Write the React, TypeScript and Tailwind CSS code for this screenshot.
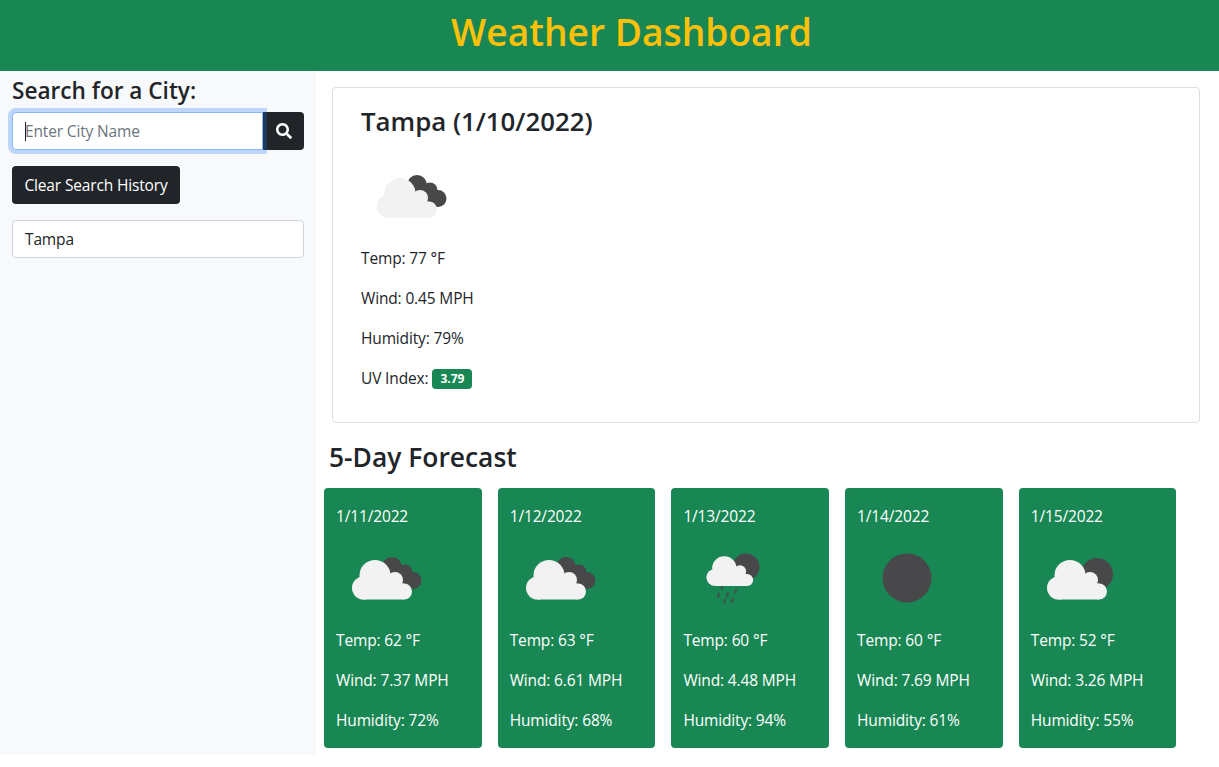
function Cloud() {
  return (
    <g fill="#f2f2f2">
      <circle cx="39" cy="45.500" r="15.500" />
      <circle cx="27.500" cy="58" r="11.500" />
      <circle cx="59" cy="50" r="8" />
      <circle cx="68" cy="61.500" r="8" />
      <path d="M27 69.500V46H59V53.500H68V69.500z" />
    </g>
  );
}

function Disc({ cx, cy, r }: { cx: number; cy: number; r: number }) {
  return <circle cx={cx} cy={cy} r={r} fill="#48484a" />;
}

function Icon({ kind }: { kind: string }) {
  return (
    <svg viewBox="0 0 100 100" className="w-[100px] h-[100px] block">
      {kind === "clouds" && (
        <>
          <Disc cx={56} cy={37} r={10} />
          <Disc cx={69} cy={42} r={7.500} />
          <Disc cx={77} cy={50.500} r={8.500} />
          <path d="M50 33L74 38L82 57L70 60L50 50z" fill="#48484a" />
          <Cloud />
        </>
      )}
      {kind === "partly" && (
        <>
          <Disc cx={66} cy={44} r={16} />
          <Cloud />
        </>
      )}
      {kind === "clear" && <Disc cx={50} cy={48} r={24.500} />}
      {kind === "rain" && (
        <>
          <Disc cx={63} cy={37} r={13.500} />
          <g transform="translate(10.900 3.800) scale(0.78 0.75)">
            <Cloud />
          </g>
          <g stroke="#48484a" strokeWidth="2.200" strokeLinecap="round" opacity="0.8">
            <path d="M39 57l-.4 1.500" />
            <path d="M36 64l-1 3" />
            <path d="M45 63l-1 3" />
            <path d="M53 60l-.8 2.500" />
            <path d="M42 70l-.8 2.500" />
            <path d="M50 69l-1 3" />
          </g>
        </>
      )}
    </svg>
  );
}

const days = [
  { d: "1/11/2022", k: "clouds", t: 62, w: "7.37", h: 72 },
  { d: "1/12/2022", k: "clouds", t: 63, w: "6.61", h: 68 },
  { d: "1/13/2022", k: "rain", t: 60, w: "4.48", h: 94 },
  { d: "1/14/2022", k: "clear", t: 60, w: "7.69", h: 61 },
  { d: "1/15/2022", k: "partly", t: 52, w: "3.26", h: 55 },
];

export default function App() {
  return (
    <div className="font-['Open_Sans','Noto_Sans',sans-serif] text-[15.500px] tracking-[-0.15px] leading-[24px] text-[#212529] bg-white min-h-[767px]">
      <header className="h-[71px] bg-[#198754] flex items-center justify-center pl-[44px] pb-[8px]">
        <h1 className="text-[37.200px] tracking-normal leading-[46px] font-semibold text-[#ffc107]">Weather Dashboard</h1>
      </header>
      <div className="flex">
        <aside className="w-[316px] h-[684px] bg-[#f8f9fa] px-3 shrink-0">
          <h2 className="text-[22.600px] tracking-normal leading-[28px] font-semibold pt-[6px]">Search for a City:</h2>
          <div className="flex mt-[7px] h-[38px]">
            <div className="relative z-10 w-[251px]">
              <input
                placeholder="Enter City Name"
                className="w-full h-[38px] bg-white border border-[#86b7fe] rounded-l-[4px] pl-[12px] pr-3 outline-none shadow-[0_0_0_4px_rgba(13,110,253,0.25)] placeholder:text-[#6c757d]"
              />
              <div className="absolute left-[13px] top-[10px] w-px h-[19px] bg-[#212529]" />
            </div>
            <button className="w-[41px] h-[38px] bg-[#212529] rounded-r-[4px] flex items-center justify-center">
              <svg viewBox="0 0 512 512" className="w-4 h-4" fill="#fff">
                <path d="M505 442.700L405.300 343c-4.500-4.500-10.600-7-17-7H372c27.600-35.300 44-79.700 44-128C416 93.100 322.900 0 208 0S0 93.100 0 208s93.100 208 208 208c48.300 0 92.700-16.400 128-44v16.300c0 6.400 2.500 12.500 7 17l99.700 99.700c9.400 9.400 24.600 9.400 33.900 0l28.300-28.300c9.400-9.400 9.400-24.600.1-34zM208 336c-70.700 0-128-57.200-128-128 0-70.700 57.200-128 128-128 70.700 0 128 57.200 128 128 0 70.700-57.200 128-128 128z" />
              </svg>
            </button>
          </div>
          <button className="block mt-4 h-[38px] w-[168px] bg-[#212529] text-white rounded-[4px]">Clear Search History</button>
          <div className="mt-4 h-[38px] bg-white border border-[#ced4da] rounded-[4px] pl-3 flex items-center">Tampa</div>
        </aside>
        <main className="flex-1 min-w-0">
          <section className="mt-4 ml-4 w-[868px] h-[336px] border border-[#dfdfdf] rounded-[4px] pl-7">
            <h2 className="text-[25.800px] tracking-normal leading-[32px] font-semibold pt-[17px]">Tampa (1/10/2022)</h2>
            <div className="mt-[11px] -mb-[2px]"><Icon kind="clouds" /></div>
            <p className="mb-4">Temp: 77 °F</p>
            <p className="mb-4">Wind: 0.45 MPH</p>
            <p className="mb-4">Humidity: 79%</p>
            <p className="flex items-center gap-1">
              UV Index:
              <span className="inline-flex items-center justify-center w-[40px] h-[20px] mt-[2px] rounded-[4px] bg-[#198754] text-white text-[12px] tracking-normal font-bold">3.79</span>
            </p>
          </section>
          <h2 className="text-[26.400px] tracking-normal leading-[34px] font-semibold ml-[13px] mt-[17px]">5-Day Forecast</h2>
          <div className="flex gap-[16.100px] ml-2 mt-[14px]">
            {days.map((x) => (
              <div key={x.d} className="w-[157.600px] h-[260px] rounded-[4px] bg-[#198754] text-white px-3 pt-4">
                <div>{x.d}</div>
                <div className="mt-[2px] -mb-[2px]"><Icon kind={x.k} /></div>
                <p className="mb-4">Temp: {x.t} °F</p>
                <p className="mb-4">Wind: {x.w} MPH</p>
                <p>Humidity: {x.h}%</p>
              </div>
            ))}
          </div>
        </main>
      </div>
    </div>
  );
}
